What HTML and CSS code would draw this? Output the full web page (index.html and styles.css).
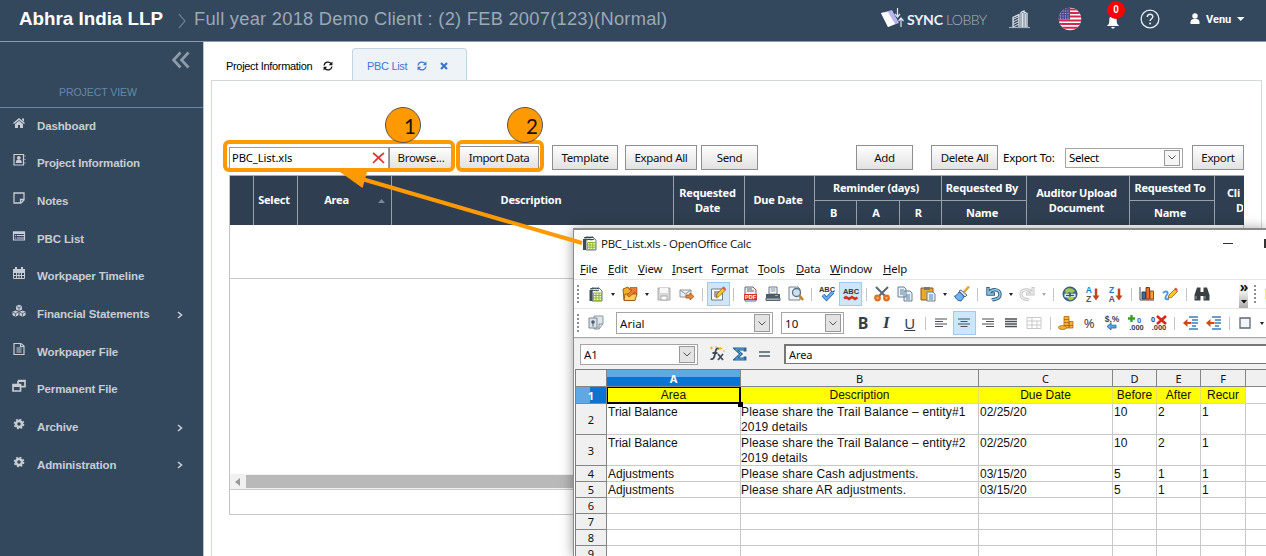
FILE: index.html
```html
<!DOCTYPE html>
<html lang="en">
<head>
<meta charset="utf-8">
<title>PBC List</title>
<link rel="stylesheet" href="styles.css">
</head>
<body>
<div class="app">
  <header class="topbar">
    <div class="firm">Abhra India LLP</div>
    <svg class="crumb" width="9" height="16" viewBox="0 0 9 16"><path d="M1 1l6 7-6 7" fill="none" stroke="#6a7c90" stroke-width="1.2"/></svg>
    <div class="project">Full year 2018 Demo Client : (2) FEB 2007(123)(Normal)</div>
    <div class="tools">
      <svg width="24" height="22" viewBox="0 0 24 22"><path d="M0 5l11-3 7 13-11 4z" fill="#b9b3f0"/><path d="M0 5l7-1 7 12-7 3z" fill="#fff"/><path d="M16.500 0v8M14 6l2.500 3L19 6M20 19v-8M17.500 13l2.500-3 2.500 3" fill="none" stroke="#dfe5ec" stroke-width="1.200"/></svg>
      <div class="sync"><b>SYNC</b> <span>LOBBY</span></div>
      <svg class="building" width="22" height="19" viewBox="0 0 22 19"><path d="M0 17.500h21" stroke="#9fb0bd" stroke-width="1.200"/><path d="M4 17V7.500l6-3V17M12 17V2.500l3-1.500v16M15 2l3 1.500V17" fill="none" stroke="#dfe5ea" stroke-width="1.300"/><path d="M4 9.500l6-3M4 12l6-3M4 14.500l6-3M4 17l6-3M13.500 3v14M16.600 4v13" stroke="#dfe5ea" stroke-width="1"/></svg>
      <svg class="flag" width="24" height="24" viewBox="0 0 24 24"><clipPath id="fc"><circle cx="12" cy="12" r="11.200"/></clipPath><g clip-path="url(#fc)"><path fill="#fff" d="M0 0h24v24H0z"/><path d="M0 2.500h24M0 6h24M0 9.500h24M0 13.500h24M0 17h24M0 20.800h24" stroke="#d22a4c" stroke-width="1.900"/><path fill="#4b4a8c" d="M0 0h12v12.500H0z"/><path d="M2 4h10M2 6.500h10M2 9h10M2 11.200h10" stroke="#b9b9dc" stroke-width="1" stroke-dasharray="1 1.500"/></g></svg>
      <div class="bell">
        <svg width="14" height="16" viewBox="0 0 14 16"><path d="M7 1C4 1 3.300 4 3.300 7S2 11 .8 12h12.400C12 11 10.700 10 10.700 7S10 1 7 1zM5.300 13h3.400c0 2-3.400 2-3.400 0z" fill="#fff"/></svg>
        <span class="badge">0</span>
      </div>
      <svg class="help" width="20" height="20" viewBox="0 0 20 20"><circle cx="10" cy="10" r="8.900" fill="none" stroke="#e8ecf0" stroke-width="1.300"/><path d="M7.300 8C7.200 4.200 13 4.400 12.800 7.800c-.1 1.900-2.700 2-2.700 4.200" fill="none" stroke="#e8ecf0" stroke-width="1.500"/><circle cx="10.100" cy="14.600" r="1" fill="#e8ecf0"/></svg>
      <svg class="user" width="10" height="12" viewBox="0 0 10 12"><circle cx="5" cy="3" r="2.700" fill="#fff"/><path d="M.5 11V9C.5 6.500 2.500 6 5 6s4.500.5 4.500 3v2z" fill="#fff"/></svg>
      <div class="venu">Venu</div>
      <svg class="caret" width="8" height="4" viewBox="0 0 8 4"><path d="M0 0h7.500L3.700 4z" fill="#fff"/></svg>
    </div>
  </header>
  <div class="body">
    <nav class="side">
      <svg class="collapse" width="20" height="18" viewBox="0 0 20 18"><path d="M9.500 1.500L2.500 9l7 7.500M17.500 1.500L10.500 9l7 7.500" fill="none" stroke="#8e9baa" stroke-width="2.700"/></svg>
      <div class="view">PROJECT VIEW</div>
      <a class="nav"><svg viewBox="0 0 14 14"><path d="M7 2l6 5-1 1-5-4-5 4-1-1zM10 2.500h2v3l-2-1.600zM3 8l4-3.200L11 8v4H8V9H6v3H3z"/></svg>Dashboard</a>
      <a class="nav"><svg viewBox="0 0 14 14"><path d="M2 1.500h9.500v10.500H2zM12.500 3h1M12.500 6.500h1M12.500 10h1" fill="none" stroke="#c8cdd3" stroke-width="1.200"/><circle cx="6.800" cy="4.800" r="1.900"/><path d="M3.800 10c0-3 1-3.500 3-3.500s3 .5 3 3.500z"/></svg>Project Information</a>
      <a class="nav"><svg viewBox="0 0 14 14"><path d="M2 2h10v7l-3 3H2zM12 8.500H8.500V12" fill="none" stroke="#c8cdd3" stroke-width="1.300"/></svg>Notes</a>
      <a class="nav"><svg viewBox="0 0 14 14"><path d="M1.500 3h11v8h-11z" fill="none" stroke="#c8cdd3" stroke-width="1.200"/><path d="M1 2.500h12V5H1zM3 6h1.200v1H3zM5 6h7v1H5zM3 8.500h1.200v1H3zM5 8.500h7v1H5z"/></svg>PBC List</a>
      <a class="nav"><svg viewBox="0 0 14 14"><path d="M1.500 3.500h11v9h-11zM2 6.500h10M2 9.500h10M4.500 6v6.500M7 6v6.500M9.500 6v6.500" fill="none" stroke="#c8cdd3" stroke-width="1"/><path d="M1 3h12v3H1zM3 1h2v3H3zM9 1h2v3H9z"/></svg>Workpaper Timeline</a>
      <a class="nav"><svg viewBox="0 0 14 14"><path d="M7 .8l3 1.300v3.400L7 7 4 5.500V2.100zM3.500 6.500l3 1.300v3.400l-3 1.500-3-1.500V7.800zM10.500 6.500l3 1.300v3.400l-3 1.500-3-1.500V7.800z"/><path d="M4.500 2.500L7 3.700l2.500-1.200M1 8.300l2.500 1.200L6 8.300M8 8.300l2.500 1.200L13 8.300M3.500 9.500v3M10.500 9.500v3M7 3.700v3" fill="none" stroke="#33475d" stroke-width=".7"/></svg>Financial Statements<svg class="more" viewBox="0 0 6 8"><path d="M1 1l3.500 3L1 7" fill="none" stroke="#c8cdd3" stroke-width="1.600"/></svg></a>
      <a class="nav"><svg viewBox="0 0 14 14"><path d="M2 1.500h7L12 4v8.500H2zM8.500 1.500v3H12M4.500 6h5M4.500 8h5M4.500 10h5" fill="none" stroke="#c8cdd3" stroke-width="1.200"/></svg>Workpaper File</a>
      <a class="nav"><svg viewBox="0 0 14 14"><path d="M6 1.700h7v6H9M6 1.700v3M1 5.700h7.500V12H1z" fill="none" stroke="#c8cdd3" stroke-width="1.700"/><path d="M1 5h7v3H1zM6 1h7v2H6z"/></svg>Permanent File</a>
      <a class="nav"><svg viewBox="0 0 14 14"><circle cx="7" cy="7" r="3" fill="none" stroke="#c8cdd3" stroke-width="2.400"/><circle cx="7" cy="7" r="4.600" fill="none" stroke="#c8cdd3" stroke-width="1.500" stroke-dasharray="1.900 1.710"/></svg>Archive<svg class="more" viewBox="0 0 6 8"><path d="M1 1l3.500 3L1 7" fill="none" stroke="#c8cdd3" stroke-width="1.600"/></svg></a>
      <a class="nav"><svg viewBox="0 0 14 14"><circle cx="7" cy="7" r="3" fill="none" stroke="#c8cdd3" stroke-width="2.400"/><circle cx="7" cy="7" r="4.600" fill="none" stroke="#c8cdd3" stroke-width="1.500" stroke-dasharray="1.900 1.710"/></svg>Administration<svg class="more" viewBox="0 0 6 8"><path d="M1 1l3.500 3L1 7" fill="none" stroke="#c8cdd3" stroke-width="1.600"/></svg></a>
    </nav>
    <main class="main">
      <div class="tabs">
        <div class="tab first">Project Information<svg width="10" height="10" viewBox="0 0 10 10"><path d="M1 4.500A4 4 0 0 1 8 2.500M9 5.500A4 4 0 0 1 2 7.500" fill="none" stroke="#111" stroke-width="1.300"/><path d="M9.400.5v3.700H5.800zM.6 9.500V5.800h3.600z" fill="#111"/></svg></div>
        <div class="tab on">PBC List<svg width="10" height="10" viewBox="0 0 10 10"><path d="M1 4.500A4 4 0 0 1 8 2.500M9 5.500A4 4 0 0 1 2 7.500" fill="none" stroke="#3b76d0" stroke-width="1.300"/><path d="M9.400.5v3.700H5.800zM.6 9.500V5.800h3.600z" fill="#3b76d0"/></svg><svg class="close" width="8" height="8" viewBox="0 0 8 8"><path d="M1 1l6 6M7 1L1 7" stroke="#3b76d0" stroke-width="2.200"/></svg></div>
      </div>
      <section class="panel">
        <div class="actions">
          <div class="file"><span>PBC_List.xls</span><svg width="13" height="12" viewBox="0 0 13 12"><path d="M1 1c4 3 7 6 11 10M12 1C8 4 4 8 1 11" fill="none" stroke="#e5332f" stroke-width="1.700"/></svg></div>
          <button class="btn browse">Browse...</button>
          <button class="btn import">Import Data</button>
          <button class="btn template">Template</button>
          <button class="btn expand">Expand All</button>
          <button class="btn send">Send</button>
          <button class="btn add">Add</button>
          <button class="btn delete">Delete All</button>
          <label class="exlabel">Export To:</label>
          <div class="combo select"><span>Select</span><i><svg width="8" height="5" viewBox="0 0 8 5"><path d="M.5.500L4 4 7.500.5" fill="none" stroke="#555"/></svg></i></div>
          <button class="btn export">Export</button>
        </div>
        <div class="grid">
          <div class="head">
            <div class="tall"></div>
            <div class="tall">Select</div>
            <div class="tall area">Area<svg width="7" height="4" viewBox="0 0 7 4"><path d="M0 4h7L3.500 0z" fill="#7d8894"/></svg></div>
            <div class="tall">Description</div>
            <div class="tall">Requested<br>Date</div>
            <div class="tall">Due Date</div>
            <div class="group">
              <div class="top">Reminder (days)</div>
              <div class="subs"><div>B</div><div>A</div><div>R</div></div>
            </div>
            <div class="group">
              <div class="top">Requested By</div>
              <div class="subs"><div>Name</div></div>
            </div>
            <div class="tall">Auditor Upload<br>Document</div>
            <div class="group">
              <div class="top">Requested To</div>
              <div class="subs"><div>Name</div></div>
            </div>
            <div class="tall last"><span>Cli</span><span class="in">D</span></div>
          </div>
          <div class="row"></div>
          <div class="empty"></div>
          <div class="scroll"><svg width="5" height="8" viewBox="0 0 5 8"><path d="M5 0v8L0 4z" fill="#999"/></svg><div class="thumb"></div></div>
          <div class="foot"></div>
        </div>
      </section>
    </main>
  </div>
</div>

<div class="window">
  <div class="title">
    <svg width="14" height="15" viewBox="0 0 14 15"><path d="M3 1h7l3 3v10H3z" fill="#f7faee" stroke="#6b7a7d"/><path d="M0 3h3v11H0z" fill="#3d4f55"/><path d="M1 2c3-2 6 1 9-1M3 4c3-2 5 1 8-1" stroke="#33484e" fill="none" stroke-width="1.200"/><path d="M4.500 6.500h8v7h-8zM4.500 9h8M4.500 11.200h8M7 6.500v7M9.800 6.500v7" stroke="#8fb52b" fill="#f0f7cf"/></svg>
    <span>PBC_List.xls - OpenOffice Calc</span><i class="min"></i><i class="max"></i>
  </div>
  <div class="menu"><span class="w1"><u>F</u>ile</span><span class="w2"><u>E</u>dit</span><span class="w3"><u>V</u>iew</span><span class="w4"><u>I</u>nsert</span><span class="w5">F<u>o</u>rmat</span><span class="w6"><u>T</u>ools</span><span class="w7"><u>D</u>ata</span><span class="w8"><u>W</u>indow</span><span><u>H</u>elp</span></div>
  <div class="bar std">
    <i class="grip"></i>
    <b class="ic"><svg viewBox="0 0 16 16"><path d="M4 2h7l3 3v10H4z" fill="#f7faee" stroke="#6b7a7d"/><path d="M1.500 4h3v11h-3z" fill="#3d4f55"/><path d="M2 3c3-2 6 1 9-1M3 5c3-2 6 1 8-1" stroke="#33484e" fill="none"/><path d="M5.500 7h8v7.500h-8zM5.500 9.500h8M5.500 12h8M8 7v7.500M11 7v7.500" stroke="#8fb52b" fill="#f0f7cf"/></svg></b>
    <b class="dd"></b>
    <b class="ic"><svg viewBox="0 0 16 16"><path d="M1 3l5-2 1 2h6v11H2z" fill="#f0ad35" stroke="#a35c10"/><path d="M3 8h12l-2 6.500H2z" fill="#ffd056" stroke="#a35c10"/><path d="M5 9l5-5H8V1.500h7V8l-2-2-6 5z" fill="#ef7a35" stroke="#9c3512" stroke-width=".6"/></svg></b>
    <b class="dd"></b>
    <b class="ic"><svg viewBox="0 0 16 16"><path d="M2 2h12v12H2z" fill="#d7d7d7" stroke="#aaa"/><path d="M4 2h8v5H4z" fill="#f7f7f7"/><path d="M5 10h6v4H5z" fill="#fff" stroke="#aaa"/></svg></b>
    <b class="ic"><svg viewBox="0 0 16 16"><path d="M1 4h11v7H1z" fill="#eceff1" stroke="#8b949a"/><path d="M1 4l5.500 4L12 4" fill="none" stroke="#8b949a"/><path d="M7 9h4V7l4 3.500-4 3.500v-2H7z" fill="#ec8a3b" stroke="#9d4b14" stroke-width=".8"/></svg></b>
    <i class="sep"></i>
    <b class="ic hl"><svg viewBox="0 0 16 16"><path d="M1.500 3h11v11h-11z" fill="#fff" stroke="#777"/><path d="M4 6h6M4 8h4M4 10h4" stroke="#444"/><path d="M6 12l1-4 6-6.500 2.500 2.500-6.500 6.500z" fill="#ffc928" stroke="#8a5b12" stroke-width=".8"/><path d="M12 2l2-1.500L16 3l-1.500 1.500z" fill="#e05050"/></svg></b>
    <i class="sep"></i>
    <b class="ic"><svg viewBox="0 0 16 16"><path d="M3 1h8l3 3v11H3z" fill="#e9f0f5" stroke="#667"/><path d="M2 8h13v6H2z" fill="#dd2f27"/><text x="8.500" y="13" class="pdf">PDF</text><path d="M5 3h5M5 5h7" stroke="#667"/></svg></b>
    <b class="ic"><svg viewBox="0 0 16 16"><path d="M4 1h8v7H4z" fill="#fff" stroke="#667580"/><path d="M5.500 3h5M5.500 5h5" stroke="#7d8a94"/><path d="M1 8h14v4H1z" fill="#4c5b67"/><path d="M1 12h14v2.500H1z" fill="#aab4bb" stroke="#54616b"/><path d="M10 9.500h3" stroke="#7bd04e"/></svg></b>
    <b class="ic"><svg viewBox="0 0 16 16"><path d="M1 1h9l2 2v11H1z" fill="#eef3f7" stroke="#76838d"/><circle cx="8.500" cy="6.500" r="4" fill="#c6e1f4" stroke="#5b7080" stroke-width="1.300"/><path d="M11.500 9.500L15 14" stroke="#c1822c" stroke-width="2.400"/></svg></b>
    <i class="sep"></i>
    <b class="ic"><svg viewBox="0 0 16 16"><text x="8" y="5.500" class="abc">ABC</text><path d="M4 9l3.500 4L14 6" fill="none" stroke="#2c5d9e" stroke-width="3.500"/><path d="M4 9l3.500 4L14 6" fill="none" stroke="#67b3f0" stroke-width="2"/></svg></b>
    <b class="ic hl"><svg viewBox="0 0 16 16"><text x="8" y="8" class="abc">ABC</text><path d="M1 12.500l2-1.500 3 2 3-2 3 2 2.500-1.500" fill="none" stroke="#e02d20" stroke-width="2.500"/></svg></b>
    <i class="sep"></i>
    <b class="ic"><svg viewBox="0 0 16 16"><path d="M2 1l9.500 9.500M14 1L4.500 10.500" stroke="#5a6a75" stroke-width="2"/><circle cx="3.500" cy="12" r="2.300" fill="#f6b27a" stroke="#e0701d" stroke-width="2.200"/><circle cx="12.500" cy="12" r="2.300" fill="#f6b27a" stroke="#e0701d" stroke-width="2.200"/></svg></b>
    <b class="ic"><svg viewBox="0 0 16 16"><path d="M1 1h6l2 2v8H1zM7 5h6l2 2v8H7z" fill="#eaf3fa" stroke="#6a7f90"/><path d="M3 4h4M3 6h3M3 8h3M9 9h4M9 11h4M9 13h4" stroke="#4f7fa5"/></svg></b>
    <b class="ic"><svg viewBox="0 0 16 16"><path d="M1 2h12v12H1z" fill="#e7a92f" stroke="#8b5d14"/><path d="M4 1h6v3H4z" fill="#777"/><path d="M7 6h6l2 2v7H7z" fill="#eaf3fa" stroke="#6a7f90"/><path d="M9 9h4M9 11h4M9 13h4" stroke="#4f7fa5"/></svg></b>
    <b class="dd"></b>
    <b class="ic"><svg viewBox="0 0 16 16"><path d="M10 6l5-5.500" stroke="#e3a22c" stroke-width="2.500"/><path d="M7 4l6 5-2 2-6-6z" fill="#d9e1e7" stroke="#5d6c78"/><path d="M5 6c2 1 4 3 5 5l-3 4c-3 0-5-2-6.500-5 2 0 3-2 4.500-4z" fill="#6fb2ee" stroke="#2a62a4"/></svg></b>
    <i class="sep"></i>
    <b class="ic"><svg viewBox="0 0 16 16"><path d="M2 1v7h7M3 7c3-5 11-4 11 1.500S8 13 6 14" fill="none" stroke="#315f83" stroke-width="3.400"/><path d="M2 2v6h6M3 7c3-5 11-4 11 1.500S8 13 6 14" fill="none" stroke="#8fc3e8" stroke-width="1.500"/></svg></b>
    <b class="dd"></b>
    <b class="ic"><svg viewBox="0 0 16 16"><path d="M14 1v7H7M13 7C10 2 2 3 2 8.500S8 13 10 14" fill="none" stroke="#c4c4c4" stroke-width="3"/><path d="M14 2v6H8M13 7C10 2 2 3 2 8.500S8 13 10 14" fill="none" stroke="#f1f1f1" stroke-width="1.200"/></svg></b>
    <b class="dd dim"></b>
    <i class="sep"></i>
    <b class="ic"><svg viewBox="0 0 16 16"><circle cx="8" cy="8" r="7" fill="#3d6e98" stroke="#2c4a63"/><path d="M3 4c3-3 8-2 10 1l-3 2-3-1-3 2zM4 11l7-1 1 3-4 1.500z" fill="#a3c94a"/><path d="M2.500 9.500h4.500M9 9.500h4.500" stroke="#e7eef3" stroke-width="3.500"/><path d="M4 9.500h8" stroke="#40525f" stroke-width="1.200"/></svg></b>
    <b class="ic"><svg viewBox="0 0 16 16"><text x="3.700" y="7" class="az blue">A</text><text x="3.700" y="15.500" class="az">Z</text><path d="M11 2.500v8" stroke="#c4441c" stroke-width="2.500"/><path d="M7.500 9.500h7L11 14.500z" fill="#c4441c"/></svg></b>
    <b class="ic"><svg viewBox="0 0 16 16"><text x="3.700" y="7" class="az blue">Z</text><text x="3.700" y="15.500" class="az">A</text><path d="M11 2.500v8" stroke="#c4441c" stroke-width="2.500"/><path d="M7.500 9.500h7L11 14.500z" fill="#c4441c"/></svg></b>
    <i class="sep"></i>
    <b class="ic"><svg viewBox="0 0 16 16"><path d="M1 1v13h14" fill="none" stroke="#444"/><path d="M3 6h3.500v7H3z" fill="#386f9c" stroke="#223f58"/><path d="M7 1.500h3.500V13H7z" fill="#ef6a26" stroke="#8c3510"/><path d="M11 5h3.500v8H11z" fill="#f6a13b" stroke="#935310"/></svg></b>
    <b class="ic"><svg viewBox="0 0 16 16"><path d="M1 7c3-3 6-1 4 1.500S2 14 7 13" fill="none" stroke="#4a9be0" stroke-width="2"/><path d="M6 12l1-3 6-6 2.500 2.500-6 6z" fill="#ffc928" stroke="#8a5b12" stroke-width=".8"/><path d="M12 3l2-1.500L16 4l-1.500 1.500z" fill="#e05050"/></svg></b>
    <i class="sep"></i>
    <b class="ic"><svg viewBox="0 0 16 16"><path d="M3 1.500h3.500V6h3V1.500H13l2.500 7.500v5.500h-6V10h-3v4.500h-6V9z" fill="#3a3f43"/><path d="M2 10v3M11 10v3" stroke="#8b9297" stroke-width="1.200"/></svg></b>
    <div class="over">»<svg width="6" height="4" viewBox="0 0 6 4"><path d="M0 0h6L3 3.500z" fill="#111"/></svg></div>
    <i class="grip g2"></i>
    <i class="edge"></i>
  </div>
  <div class="bar fmt">
    <i class="grip"></i>
    <b class="ic"><svg viewBox="0 0 16 16"><path d="M6 1h9v8l-4 5H6z" fill="#dfe6ec" stroke="#8a97a2"/><path d="M1 3h8v10H1z" fill="#dbe3ea" stroke="#7b8994"/><circle cx="5" cy="7" r="1.800" fill="#4e5c67"/><path d="M5 8v3.500" stroke="#4e5c67"/><path d="M15 9h-4v5" fill="none" stroke="#8a97a2"/></svg></b>
    <div class="combo font"><span>Arial</span><i><svg width="8" height="5" viewBox="0 0 8 5"><path d="M.5.500L4 4 7.500.5" fill="none" stroke="#555"/></svg></i></div>
    <div class="combo size"><span>10</span><i><svg width="8" height="5" viewBox="0 0 8 5"><path d="M.5.500L4 4 7.500.5" fill="none" stroke="#555"/></svg></i></div>
    <b class="ic ch">B</b><b class="ic ch it">I</b><b class="ic ch un">U</b>
    <i class="sep"></i>
    <b class="ic"><svg viewBox="0 0 16 16"><path d="M2 4h12M2 6.500h8M2 9h12M2 11.500h8" stroke="#4b5057" stroke-width="1.200"/></svg></b>
    <b class="ic hl"><svg viewBox="0 0 16 16"><path d="M2 4h12M4.500 6.500h7M2 9h12M4.500 11.500h7" stroke="#4b5057" stroke-width="1.200"/></svg></b>
    <b class="ic"><svg viewBox="0 0 16 16"><path d="M2 4h12M6 6.500h8M2 9h12M6 11.500h8" stroke="#4b5057" stroke-width="1.200"/></svg></b>
    <b class="ic"><svg viewBox="0 0 16 16"><path d="M2 4h12M2 6.500h12M2 9h12M2 11.500h12" stroke="#4b5057" stroke-width="1.300"/></svg></b>
    <b class="ic"><svg viewBox="0 0 16 16"><path d="M1 2.500h14v11H1zM1 6h14M1 10h14M6 2.500v11M11 6v7" fill="none" stroke="#c9c9c9"/></svg></b>
    <i class="sep"></i>
    <b class="ic"><svg viewBox="0 0 16 16"><path d="M6 1.500h5V13H6zM11 6.500h4V13h-4z" fill="#f3b23d" stroke="#a8640f" stroke-width=".8"/><ellipse cx="4.500" cy="12.500" rx="4" ry="2" fill="#f3b23d" stroke="#a8640f" stroke-width=".8"/><path d="M6 4.500h5M6 7.500h5M6 10.500h9" stroke="#a8640f" stroke-width=".8"/></svg></b>
    <b class="ic pct">%</b>
    <b class="ic"><svg viewBox="0 0 16 16"><text x="8" y="7" class="cur">$,%</text><path d="M3 11.500l4-3.500v2.200h5v2.800H7V15z" fill="#5ba4e6" stroke="#265a91" stroke-width=".8"/></svg></b>
    <b class="ic"><svg viewBox="0 0 16 16"><path d="M3.500 0v7M0 3.500h7" stroke="#3e9d1e" stroke-width="2.400"/><text x="11" y="8" class="num blue2">0</text><text x="8.500" y="15" class="num">.000</text></svg></b>
    <b class="ic"><svg viewBox="0 0 16 16"><text x="2" y="6.500" class="num">0</text><path d="M6 1l9 8M15 1L6 9" stroke="#d8261c" stroke-width="2.600"/><text x="8" y="15" class="num">.000</text></svg></b>
    <i class="sep"></i>
    <b class="ic"><svg viewBox="0 0 16 16"><path d="M6 2h9M9 5h6M9 8h6M9 11h4M6 14h9" stroke="#3d7fb9" stroke-width="1.400"/><path d="M0 8l4.500-4V7h4v2h-4v3z" fill="#d04a18"/></svg></b>
    <b class="ic"><svg viewBox="0 0 16 16"><path d="M6 2h9M9 5h6M9 8h6M9 11h4M6 14h9" stroke="#3d7fb9" stroke-width="1.400"/><path d="M0 8l4.500-4V7h4v2h-4v3z" fill="#d04a18"/></svg></b>
    <i class="sep"></i>
    <b class="ic"><svg viewBox="0 0 16 16"><path d="M3 3h10v10H3z" fill="#f2f7fb" stroke="#5b6670" stroke-width="1.300"/></svg></b>
    <b class="dd"></b>
  </div>
  <div class="formula">
    <div class="combo cellref"><span>A1</span><i><svg width="8" height="5" viewBox="0 0 8 5"><path d="M.5.500L4 4 7.500.5" fill="none" stroke="#555"/></svg></i></div>
    <b class="fx"><svg width="16" height="16" viewBox="0 0 16 16"><path d="M10 3C7 1 6.500 5 6 8s-1.500 6-4.500 5M3.500 7h5" fill="none" stroke="#3d4c57" stroke-width="1.800"/><path d="M9 8l5 6M14 8l-5 6" stroke="#3d4c57" stroke-width="1.700"/><path d="M1 2h3M2.500.5v3M6 1h2M11 1v3M9.500 2.500h4M14 5h2" stroke="#f5b21f" stroke-width="1.200"/></svg></b>
    <b class="sum"><svg width="14" height="14" viewBox="0 0 14 14"><path d="M12 4.500V2H2.500L8 7l-5.500 5H12V9.500" fill="none" stroke="#265e8e" stroke-width="2.800"/><path d="M11.500 2H2.500L8 7l-5.500 5h9" fill="none" stroke="#62b1e2"/></svg></b>
    <b class="eq"><svg width="11" height="6" viewBox="0 0 11 6"><path d="M0 1h11M0 5h11" stroke="#4c5b67" stroke-width="1.600"/></svg></b>
    <div class="input">Area</div>
  </div>
  <div class="sheet">
    <div class="corner"></div><div class="ch0 cur0">A</div><div class="ch0">B</div><div class="ch0">C</div><div class="ch0">D</div><div class="ch0">E</div><div class="ch0">F</div><div class="ch0"></div>
    <div class="rh cur1">1</div><div class="y sel">Area</div><div class="y">Description</div><div class="y">Due Date</div><div class="y">Before</div><div class="y">After</div><div class="y">Recur</div><div></div>
    <div class="rh">2</div><div>Trial Balance</div><div class="wide">Please share the Trail Balance – entity#1 2019 details</div><div>02/25/20</div><div>10</div><div>2</div><div>1</div><div></div>
    <div class="rh">3</div><div>Trial Balance</div><div class="wide">Please share the Trail Balance – entity#2 2019 details</div><div>02/25/20</div><div>10</div><div>2</div><div>1</div><div></div>
    <div class="rh">4</div><div>Adjustments</div><div class="wide">Please share Cash adjustments.</div><div>03/15/20</div><div>5</div><div>1</div><div>1</div><div></div>
    <div class="rh">5</div><div>Adjustments</div><div class="wide">Please share AR adjustments.</div><div>03/15/20</div><div>5</div><div>1</div><div>1</div><div></div>
    <div class="rh">6</div><div></div><div></div><div></div><div></div><div></div><div></div><div></div>
    <div class="rh">7</div><div></div><div></div><div></div><div></div><div></div><div></div><div></div>
    <div class="rh">8</div><div></div><div></div><div></div><div></div><div></div><div></div><div></div>
    <div class="rh">9</div><div></div><div></div><div></div><div></div><div></div><div></div><div></div>
    <i class="handle"></i>
  </div>
</div>

<div class="mark box1"></div>
<div class="mark box2"></div>
<svg class="arrow" width="1266" height="556" viewBox="0 0 1266 556"><path d="M582 243L362 179" stroke="#ff9900" stroke-width="4"/><path d="M340 172h27l-4.500 16z" fill="#ff9900"/></svg>
<div class="step s1">1</div>
<div class="step s2">2</div>
</body>
</html>
```
FILE: styles.css
```css
* { box-sizing: border-box; }
body { margin: 0; width: 1266px; height: 556px; overflow: hidden; position: relative; font-family: "Liberation Sans", sans-serif; background: #fff; }
svg { display: block; flex: none; }
.app { height: 556px; display: flex; flex-direction: column; }

/* top bar */
.topbar { height: 42px; flex: none; display: flex; align-items: center; background: #33475d; border-bottom: 1px solid #8b9bb0; padding-left: 19px; white-space: nowrap; padding-bottom: 3px; }
.firm { font-size: 18.800px; font-weight: bold; color: #fff; width: 159px; }
.crumb { margin-top: 3px; }
.project { font-size: 18.300px; letter-spacing: .26px; color: #9ca9b6; margin-left: 7px; }
.tools { display: flex; align-items: center; width: 385px; margin-left: auto; }
.sync { font-family: Lato, sans-serif; font-size: 14px; letter-spacing: -.5px; color: #eef1f4; margin-left: 2px; width: 102px; }
.sync b { letter-spacing: -.2px; }
.sync span { color: #aab5c0; font-weight: 300; }
.building { width: 22px; }
.flag { margin-left: 27px; }
.bell { position: relative; margin-left: 24px; padding-top: 5px; width: 14px; }
.badge { position: absolute; left: 1px; top: -8px; width: 18px; height: 18px; border-radius: 9px; background: #f00; color: #fff; font: bold 10px/17px "Liberation Sans", sans-serif; text-align: center; }
.help { margin-left: 20px; }
.user { margin-left: 30px; }
.venu { font: bold 11px Roboto, sans-serif; color: #fff; margin-left: 6px; width: 31px; }

/* side navigation */
.body { flex: 1; display: flex; }
.side { width: 204px; background: #33475d; border-right: 1px solid #b8c3ce; display: flex; flex-direction: column; }
.collapse { margin: 9px 0 0 171px; }
.view { height: 39px; padding: 17px 0 0 59px; font-size: 10.600px; letter-spacing: -.12px; color: #6787a8; border-bottom: 1px solid #6a87a6; }
.nav { height: 37.670px; display: flex; align-items: center; padding: 0 0 2px 12px; font-size: 11.500px; font-weight: bold; letter-spacing: -.13px; color: #c8cdd3; }
.nav svg { width: 14px; height: 14px; margin: -6px 11px 0 0; fill: #c8cdd3; }
.nav .more { width: 6px; height: 8px; margin: 1px 20px 0 auto; }

/* tabs and panel */
.main { flex: 1; padding: 6px 4px 0 7px; display: flex; flex-direction: column; }
.tabs { display: flex; height: 32px; font-size: 11px; letter-spacing: -.32px; }
.tab { display: flex; align-items: center; padding: 4px 0 0 14px; }
.tab svg { margin-left: 11px; }
.first { width: 141px; padding-left: 15px; }
.on { width: 115px; padding-top: 3px; color: #3f78d8; background: #eef3f7; border: 1px solid #c3d3e2; border-bottom: 0; border-radius: 4px 4px 0 0; }
.on svg { margin-left: 10px; }
.on .close { margin-left: 13px; }
.panel { flex: 1; border: 1px solid #cfdae4; border-top-color: #d5d8da; border-bottom: 0; padding: 64px 17px 0; }

/* action row */
.actions { height: 25px; display: flex; align-items: center; font: 11.500px "Noto Sans", sans-serif; letter-spacing: -.35px; white-space: nowrap; }
.btn { height: 25px; padding: 0; border: 1px solid #8f8f8f; background: linear-gradient(#fefefe, #e2e2e2); font: inherit; letter-spacing: inherit; color: #111; }
.file { width: 160px; height: 22px; border: 1px solid #9d9d9d; display: flex; align-items: center; justify-content: space-between; padding: 0 3px 0 2px; }
.file span { font-size: 11.200px; letter-spacing: -.1px; }
.browse { width: 64px; height: 22px; letter-spacing: -.2px; }
.import { width: 80px; height: 23px; margin-left: 6px; letter-spacing: -.5px; }
.template { width: 66px; margin-left: 13px; }
.expand { width: 72px; margin-left: 7px; }
.send { width: 57px; margin-left: 4px; }
.add { width: 57px; margin-left: 98px; }
.delete { width: 67px; margin-left: 18px; }
.exlabel { width: 57px; margin: 0 5px; letter-spacing: -.25px; }
.combo { display: flex; align-items: center; justify-content: space-between; background: #fff; border: 1px solid #a5a5a5; padding: 1px 2px 1px 3px; }
.combo i { align-self: stretch; width: 16px; background: #e3e3e3; border: 1px solid #999; display: flex; align-items: center; justify-content: center; }
.select { width: 118px; height: 20px; }
.select i { background: #f5f5f5; }
.export { width: 52px; margin-left: 9px; }

/* list */
.grid { margin-top: 5px; border-left: 1px solid #c3c3c3; height: 340px; display: flex; flex-direction: column; }
.head { display: grid; grid-template-columns: 24px 44px 94px 282px 71px 70px 127px 85px 103px 85px 28px; height: 50px; border-top: 1px solid #aaa; background: #2f3e50; overflow: hidden; color: #fff; font: bold 11px/15px "Noto Sans", sans-serif; letter-spacing: -.2px; text-align: center; white-space: nowrap; }
.tall { border-right: 1px solid #98a1aa; display: flex; align-items: center; justify-content: center; padding: 0 3px 2px 0; }
.group { display: flex; flex-direction: column; }
.top { height: 25px; line-height: 24px; padding-right: 4px; border-right: 1px solid #98a1aa; border-bottom: 1px solid #98a1aa; }
.subs { flex: 1; display: flex; }
.subs div { flex: 1; line-height: 23px; padding-right: 4px; border-right: 1px solid #98a1aa; }
.area { position: relative; padding-right: 16px; }
.area svg { position: absolute; right: 6px; top: 23px; }
.last { flex-direction: column; align-items: flex-start; padding-left: 12px; border-right: 0; overflow: hidden; }
.last .in { margin-left: 9px; }
.row { height: 54px; border-bottom: 1px solid #c9c9c9; border-right: 1px solid #c9c9c9; }
.empty { height: 195px; }
.scroll { height: 16px; display: flex; align-items: center; background: #f1f1f1; padding-left: 5px; border-bottom: 1px solid #ccc; }
.thumb { margin-left: 6px; height: 13px; width: 700px; background: #b9b9b9; }
.foot { height: 25px; border-bottom: 1px solid #c6c6c6; }

/* spreadsheet window */
.window { position: absolute; left: 573px; top: 228px; width: 693px; height: 328px; background: #fff; border: solid #8a8a8a; border-width: 2px 0 0 1px; box-shadow: 0 1px 12px rgba(0,0,0,.4); display: flex; flex-direction: column; overflow: hidden; font: 11.500px "Noto Sans", sans-serif; color: #111; }
.title { height: 26px; flex: none; display: flex; align-items: center; padding-left: 9px; font: 11.500px "Open Sans", sans-serif; letter-spacing: -.28px; }
.title span { margin-left: 4px; }
.min { width: 10px; height: 1px; background: #333; margin-left: auto; margin-right: 31px; }
.max { width: 2px; height: 9px; background: #333; }
.menu { height: 23px; flex: none; display: flex; align-items: center; padding: 1px 0 0 6px; font-size: 11.300px; letter-spacing: -.15px; }
.menu span { flex: none; }
.w1 { width: 28px; } .w2 { width: 30px; } .w3 { width: 34px; } .w4 { width: 39px; } .w5 { width: 47px; } .w6 { width: 38px; } .w7 { width: 34px; } .w8 { width: 53px; }
.bar { flex: none; display: flex; align-items: center; border-top: 1px solid #e6e6e6; }
.bar > * { flex: none; }
.std { height: 29px; }
.fmt { height: 30px; border-bottom: 1px solid #a5a5a5; }
.grip { width: 2px; height: 18px; margin: 0 5.400px 0 3px; background: repeating-linear-gradient(#8e8e8e 0 2px, #fff 2px 4px); }
.ic { width: 23.200px; height: 24px; display: flex; align-items: center; justify-content: center; }
.fmt .ic { width: 23.300px; }
.ic svg { width: 16px; height: 16px; overflow: visible; }
.hl { background: #cce6fb; border: 1px solid #99cdf5; }
.sep { width: 1px; height: 13px; background: #c4c4c4; margin: 0 3.600px; }
.dd { width: 10.700px; display: flex; justify-content: center; }
.dd::before { content: ""; border: 2.500px solid transparent; border-top: 3px solid #222; border-bottom: 0; }
.dim::before { border-top-color: #aaa; }
.over { width: 9px; height: 27px; margin-left: 26px; background: linear-gradient(#fff, #eee 40%, #aaa); display: flex; flex-direction: column; align-items: center; justify-content: space-between; font: bold 14px/12px "Noto Sans", sans-serif; padding-bottom: 4px; }
.g2 { margin-left: 6px; }
.edge { width: 3px; height: 10px; margin-left: 3px; background: #fff22e; }
.pdf { font: bold 5.500px "Liberation Sans", sans-serif; fill: #fff; text-anchor: middle; }
.abc { font: bold 7.500px "Liberation Sans", sans-serif; fill: #2d3a45; text-anchor: middle; }
.az { font: bold 8.500px "Liberation Sans", sans-serif; fill: #555; text-anchor: middle; }
.blue { fill: #1d7bc4; }
.cur { font: bold 8.500px "Liberation Sans", sans-serif; fill: #34424e; text-anchor: middle; }
.num { font: bold 7.500px "Liberation Sans", sans-serif; fill: #333c44; text-anchor: middle; }
.blue2 { fill: #2b62c9; }
.font { width: 157px; height: 22px; margin-left: 8.400px; }
.size { width: 63px; height: 22px; margin: 0 7.400px 0 8px; }
.ch { font: bold 16px "Noto Sans", sans-serif; color: #2f3f4e; }
.it { font-family: "Liberation Serif", serif; font-style: italic; font-size: 17px; }
.un { font-weight: normal; text-decoration: underline; font-size: 15px; }
.pct { font: 13px "Noto Sans", sans-serif; color: #34424e; }
.formula { height: 31px; flex: none; display: flex; align-items: center; background: #f1f1f1; padding-left: 6px; border-top: 1px solid #e2e2e2; }
.formula > * { flex: none; }
.cellref { width: 118px; height: 21px; }
.fx { margin-left: 11px; }
.sum { margin-left: 8px; }
.eq { margin-left: 12px; }
.formula .input { margin-left: 14px; flex: 1; height: 20px; border: 1px solid #777; border-width: 2px 0 1px 2px; background: #fff; padding-left: 3px; line-height: 17px; font-size: 11px; letter-spacing: -.1px; }

/* cells */
.sheet { position: relative; margin-left: 1px; display: grid; grid-template-columns: 31px 134px 238px 134px 44px 44px 45px 24px; grid-template-rows: 17px 17px 31px 31px 16px 16px 16px 16px 16px 16px; border-top: 1px solid #7d7d7d; border-left: 1px solid #7d7d7d; font: 12px/15px "Liberation Sans", sans-serif; color: #111; flex: none; }
.sheet > div { border-right: 1px solid #c9c9c9; border-bottom: 1px solid #c9c9c9; padding: 1px 0 0 1px; overflow: hidden; }
.sheet > .wide { letter-spacing: .16px; padding-left: 0; }
.sheet > .corner, .sheet > .ch0, .sheet > .rh { background: #f0f0f0; border-color: #858585; text-align: center; font: 11px "Noto Sans", sans-serif; display: flex; align-items: center; justify-content: center; padding: 0; }
.sheet > .cur0 { background: linear-gradient(#5fa8e6 0 45%, #0a74d3 45%); color: #fff; font-weight: bold; }
.sheet > .cur1 { background: linear-gradient(90deg, #5fa8e6 0 48%, #0a74d3 48%); color: #fff; font-weight: bold; }
.sheet > .y { background: #ff0; text-align: center; padding: 0; line-height: 17px; border-color: #e3e36a; }
.sheet > .sel { border: 1px solid #000; border-right-width: 2px; border-bottom-width: 2px; line-height: 15px; }
.handle { position: absolute; left: 162px; top: 32px; width: 5px; height: 5px; background: #000; }

/* callouts */
.mark { position: absolute; border: 4px solid #f90; border-radius: 6px; top: 140px; height: 32px; }
.box1 { left: 223px; width: 232px; }
.box2 { left: 456px; width: 88px; }
.arrow { position: absolute; left: 0; top: 0; pointer-events: none; }
.step { position: absolute; top: 107px; width: 36px; height: 36px; border: 1px solid #555; border-radius: 50%; background: #f90; font: 20.500px/37px Lato, sans-serif; color: #111; padding-left: 18px; }
.s1 { left: 385px; }
.s2 { left: 507px; }
```
